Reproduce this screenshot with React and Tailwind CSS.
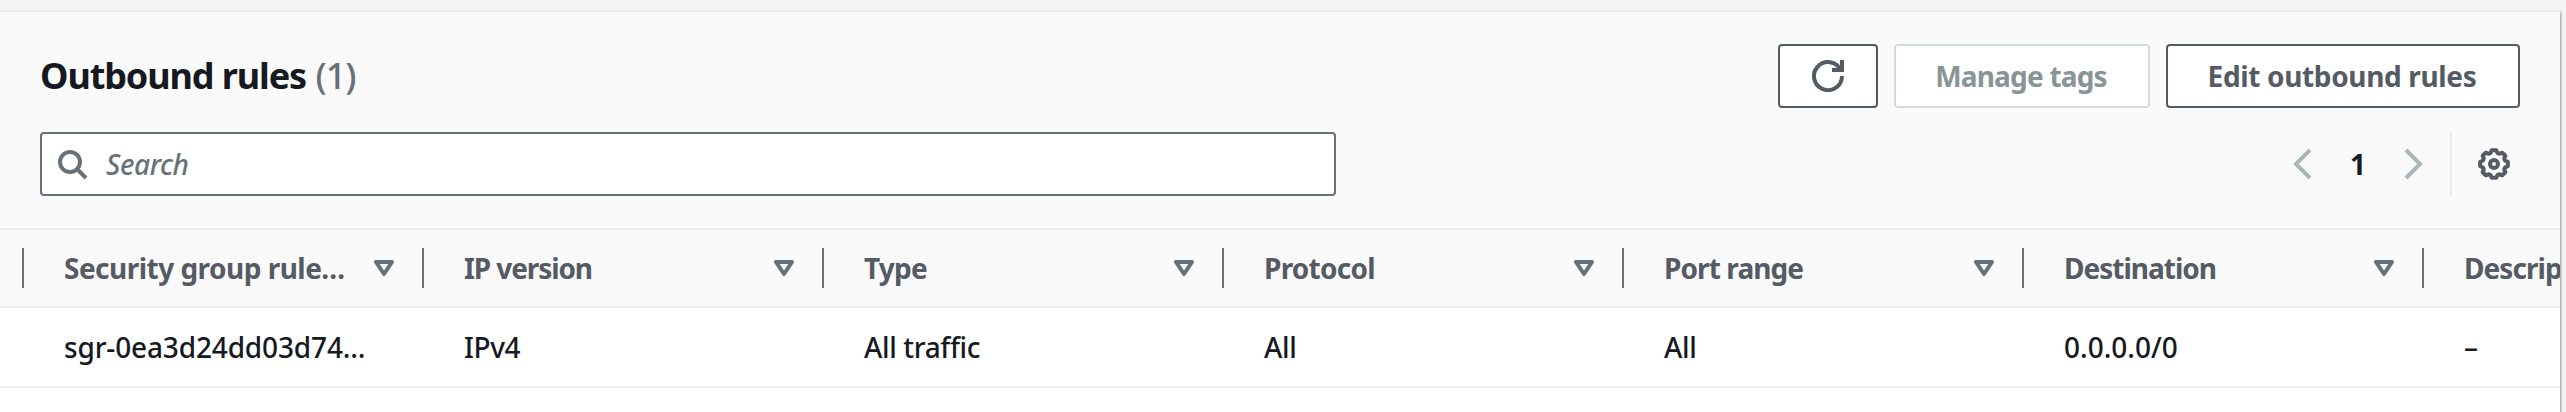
const columns = [
  { title: 'Security group rule…', value: 'sgr-0ea3d24dd03d74…', t: 'tracking-[-0.52px]', v: 'tracking-[-0.15px]' },
  { title: 'IP version', value: 'IPv4', t: 'tracking-[-1.1px]', v: 'tracking-[-0.4px]' },
  { title: 'Type', value: 'All traffic', t: 'tracking-[-0.8px]', v: 'tracking-[-0.35px]' },
  { title: 'Protocol', value: 'All', t: 'tracking-[-0.75px]', v: 'tracking-[-0.3px]' },
  { title: 'Port range', value: 'All', t: 'tracking-[-0.9px]', v: 'tracking-[-0.3px]' },
  { title: 'Destination', value: '0.0.0.0/0', t: 'tracking-[-1px]', v: '' },
  { title: 'Description', value: '–', t: 'tracking-[-0.95px]', v: '' },
];

function Icon({ className = '', children }) {
  return (
    <svg viewBox="0 0 16 16" fill="none" stroke="currentColor" strokeWidth="2" className={`size-8 shrink-0 ${className}`}>
      {children}
    </svg>
  );
}

// Eight-toothed gear outline: two points across each tooth, two in each valley.
const gearPoints = Array.from({ length: 8 }, (_, i) => i * 45)
  .flatMap((a) => [
    [a - 9, 7],
    [a + 9, 7],
    [a + 18, 5.75],
    [a + 27, 5.75],
  ])
  .map(([deg, r]) => {
    const rad = (deg * Math.PI) / 180;
    return `${(8 + r * Math.cos(rad)).toFixed(2)},${(8 + r * Math.sin(rad)).toFixed(2)}`;
  })
  .join(' ');

export default function App() {
  return (
    <div className="h-[412px] w-full overflow-hidden bg-[#f2f3f3] pt-2.5 font-['Noto_Sans',sans-serif] text-[28px] text-[#16191f]">
      <main className="h-[420px] w-[2560px] border-t-2 border-[#eaeded] bg-white shadow-[1px_2px_2px_0_rgba(0,28,36,0.4)]">
        <header className="flex h-[218px] flex-col gap-6 border-b-2 border-[#eaeded] bg-[#fafafa] pl-10 pr-10 pt-8">
          <div className="flex h-16 items-center justify-between">
            <h2 className="text-[36px] font-bold leading-none">
              <span className="tracking-[-1.1px]">Outbound rules</span>{' '}
              <span className="font-medium tracking-[-1px] text-[#687078]">(1)</span>
            </h2>
            <div className="flex gap-4 font-bold text-[#545b64]">
              <button className="flex h-16 w-[100px] items-center justify-center rounded-[4px] border-2 border-[#545b64] bg-white">
                <Icon>
                  <path d="M10 5h5V0M15 8a7 7 0 1 1-.7-3" />
                </Icon>
              </button>
              <button className="h-16 w-64 whitespace-nowrap rounded-[4px] border-2 border-[#d5dbdb] bg-white pr-0.5 tracking-[-0.8px] text-[#879596]">Manage tags</button>
              <button className="h-16 w-[354px] whitespace-nowrap rounded-[4px] border-2 border-[#545b64] bg-white pr-0.5 tracking-[-0.35px]">Edit outbound rules</button>
            </div>
          </div>
          <div className="flex h-16 items-center justify-between">
            <div className="flex h-16 w-[1296px] items-center gap-[18px] rounded-[4px] border-2 border-[#687078] bg-white pl-3.5 text-[#687078]">
              <Icon>
                <circle cx="7" cy="7" r="5" />
                <path d="m10.5 10.5 4.5 4.5" />
              </Icon>
              <span className="font-medium italic tracking-[-0.4px]">Search</span>
            </div>
            <div className="flex h-16 items-center text-[#aab7b8]">
              <Icon>
                <path d="M11 1 4 8l7 7" />
              </Icon>
              <span className="w-[76px] text-center font-bold text-[#16191f]">1</span>
              <Icon>
                <path d="m5 1 7 7-7 7" />
              </Icon>
              <div className="ml-[22px] h-16 w-0.5 bg-[#eaeded]" />
              <Icon className="ml-[26px] mr-2.5 text-[#545b64]">
                <polygon points={gearPoints} strokeLinejoin="round" />
                <circle cx="8" cy="8" r="2" />
              </Icon>
            </div>
          </div>
        </header>
        <div className="overflow-hidden">
          <div className="h-[78px] border-b-2 border-[#eaeded] bg-[#fafafa] pl-[22px]">
            <div className="flex h-[76px] w-[2800px] items-center">
              {columns.map((c) => (
                <div key={c.title} className="flex h-10 w-[400px] shrink-0 items-center justify-between border-l-2 border-[#687078] pl-10 pr-7 font-bold text-[#545b64]">
                  <span className={`whitespace-nowrap ${c.t}`}>{c.title}</span>
                  <svg viewBox="0 0 20 16" className="h-4 w-5 shrink-0 fill-none stroke-[#687078]" strokeWidth="4" strokeLinejoin="round">
                    <path d="M2 2h16l-8 12z" />
                  </svg>
                </div>
              ))}
            </div>
          </div>
          <div className="h-20 border-b-2 border-[#eaeded] pl-[22px]">
            <div className="flex h-[78px] w-[2800px] items-center font-medium">
              {columns.map((c) => (
                <div key={c.title} className="w-[400px] shrink-0 whitespace-nowrap pl-[42px]">
                  <span className={c.v}>{c.value}</span>
                </div>
              ))}
            </div>
          </div>
        </div>
      </main>
    </div>
  );
}
